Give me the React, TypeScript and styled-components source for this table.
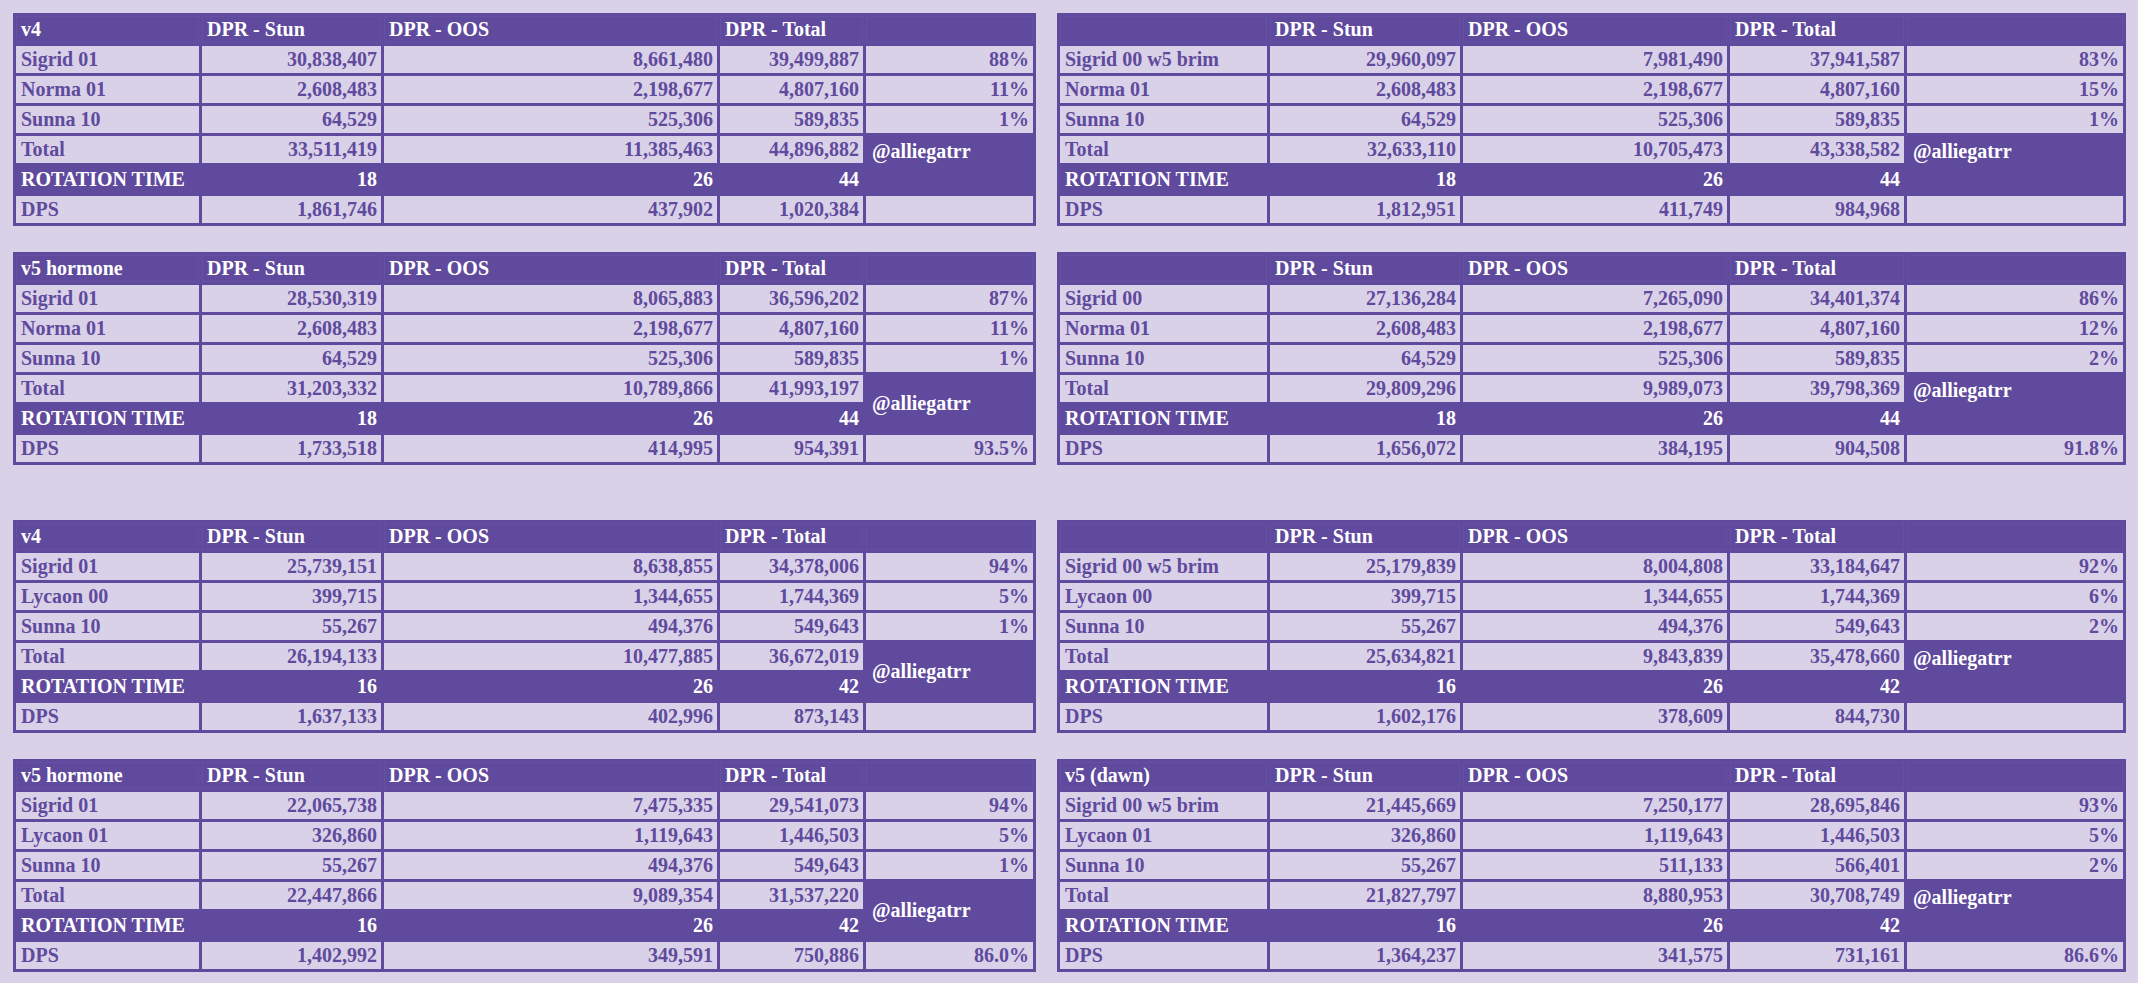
import React from 'react';
import styled, { createGlobalStyle } from 'styled-components';

const PURPLE = '#5f4a9d';
const LAVENDER = '#d9d1e8';

const GlobalStyle = createGlobalStyle`
    body {
        margin: 0;
        background: ${LAVENDER};
        font-family: "Liberation Serif", "Times New Roman", serif;
    }
`;

const Page = styled.div`
    display: flex;
    flex-direction: column;
    gap: 55px;
    padding: 13px 0 0 13px;
`;

const Section = styled.div`
    display: grid;
    grid-template-columns: 1023px 1069px;
    column-gap: 21px;
    row-gap: 26px;
    align-items: start;
`;

const Sheet = styled.table<{ $width: number }>`
    width: ${props => props.$width}px;
    table-layout: fixed;
    border-collapse: separate;
    border-spacing: 3px;
    background: ${PURPLE};
    font-size: 20px;
    font-weight: 700;
    line-height: 23px;
`;

const Row = styled.tr`
    height: 27px;
`;

const Cell = styled.td<{ $num?: boolean }>`
    height: 27px;
    padding: 0 ${props => (props.$num ? '4px' : '5px')};
    background: ${LAVENDER};
    color: ${PURPLE};
    text-align: ${props => (props.$num ? 'right' : 'left')};
    vertical-align: middle;
    white-space: nowrap;
    overflow: hidden;
`;

const HeadCell = styled.th`
    height: 27px;
    padding: 0 5px;
    background: ${PURPLE};
    box-shadow: inset 0 0 0 1px #6550a4;
    color: #ffffff;
    text-align: left;
    vertical-align: middle;
    font-weight: 700;
    white-space: nowrap;
`;

const DarkCell = styled.td<{ $num?: boolean }>`
    height: 27px;
    padding: 0 ${props => (props.$num ? '4px' : '5px')};
    background: ${PURPLE};
    color: #ffffff;
    text-align: ${props => (props.$num ? 'right' : 'left')};
    vertical-align: middle;
    white-space: nowrap;
`;

const TagCell = styled.td<{ $align: 'top' | 'middle' }>`
    padding: ${props => (props.$align === 'top' ? '4px 6px 0' : '0 6px')};
    background: ${PURPLE};
    color: #ffffff;
    text-align: left;
    vertical-align: ${props => props.$align};
    white-space: nowrap;
`;

type Dps = {
    title: string;
    tag: 'top' | 'middle';
    rows: string[][];
    total: string[];
    rotation: string[];
    dps: string[];
};

const DpsTable = ({ data, cols }: { data: Dps; cols: number[] }) => (
    <Sheet $width={cols.reduce((a, b) => a + b, 0) + 18}>
        <colgroup>
            {cols.map((w, i) => <col key={i} style={{ width: w }} />)}
        </colgroup>
        <thead>
            <Row>
                <HeadCell>{data.title}</HeadCell>
                <HeadCell>DPR - Stun</HeadCell>
                <HeadCell>DPR - OOS</HeadCell>
                <HeadCell>DPR - Total</HeadCell>
                <HeadCell />
            </Row>
        </thead>
        <tbody>
            {data.rows.map(r => (
                <Row key={r[0]}>
                    <Cell>{r[0]}</Cell>
                    <Cell $num>{r[1]}</Cell>
                    <Cell $num>{r[2]}</Cell>
                    <Cell $num>{r[3]}</Cell>
                    <Cell $num>{r[4]}</Cell>
                </Row>
            ))}
            <Row>
                <Cell>Total</Cell>
                <Cell $num>{data.total[0]}</Cell>
                <Cell $num>{data.total[1]}</Cell>
                <Cell $num>{data.total[2]}</Cell>
                <TagCell rowSpan={2} $align={data.tag}>@alliegatrr</TagCell>
            </Row>
            <Row>
                <DarkCell>ROTATION TIME</DarkCell>
                <DarkCell $num>{data.rotation[0]}</DarkCell>
                <DarkCell $num>{data.rotation[1]}</DarkCell>
                <DarkCell $num>{data.rotation[2]}</DarkCell>
            </Row>
            <Row>
                <Cell>DPS</Cell>
                <Cell $num>{data.dps[0]}</Cell>
                <Cell $num>{data.dps[1]}</Cell>
                <Cell $num>{data.dps[2]}</Cell>
                <Cell $num>{data.dps[3]}</Cell>
            </Row>
        </tbody>
    </Sheet>
);

const LEFT_COLS = [183, 179, 333, 143, 167];
const RIGHT_COLS = [207, 190, 264, 174, 216];

const top: Dps[] = [
    {
        title: 'v4',
        tag: 'top',
        rows: [
            ['Sigrid 01', '30,838,407', '8,661,480', '39,499,887', '88%'],
            ['Norma 01', '2,608,483', '2,198,677', '4,807,160', '11%'],
            ['Sunna 10', '64,529', '525,306', '589,835', '1%'],
        ],
        total: ['33,511,419', '11,385,463', '44,896,882'],
        rotation: ['18', '26', '44'],
        dps: ['1,861,746', '437,902', '1,020,384', ''],
    },
    {
        title: '',
        tag: 'top',
        rows: [
            ['Sigrid 00 w5 brim', '29,960,097', '7,981,490', '37,941,587', '83%'],
            ['Norma 01', '2,608,483', '2,198,677', '4,807,160', '15%'],
            ['Sunna 10', '64,529', '525,306', '589,835', '1%'],
        ],
        total: ['32,633,110', '10,705,473', '43,338,582'],
        rotation: ['18', '26', '44'],
        dps: ['1,812,951', '411,749', '984,968', ''],
    },
    {
        title: 'v5 hormone',
        tag: 'middle',
        rows: [
            ['Sigrid 01', '28,530,319', '8,065,883', '36,596,202', '87%'],
            ['Norma 01', '2,608,483', '2,198,677', '4,807,160', '11%'],
            ['Sunna 10', '64,529', '525,306', '589,835', '1%'],
        ],
        total: ['31,203,332', '10,789,866', '41,993,197'],
        rotation: ['18', '26', '44'],
        dps: ['1,733,518', '414,995', '954,391', '93.5%'],
    },
    {
        title: '',
        tag: 'top',
        rows: [
            ['Sigrid 00', '27,136,284', '7,265,090', '34,401,374', '86%'],
            ['Norma 01', '2,608,483', '2,198,677', '4,807,160', '12%'],
            ['Sunna 10', '64,529', '525,306', '589,835', '2%'],
        ],
        total: ['29,809,296', '9,989,073', '39,798,369'],
        rotation: ['18', '26', '44'],
        dps: ['1,656,072', '384,195', '904,508', '91.8%'],
    },
];

const bottom: Dps[] = [
    {
        title: 'v4',
        tag: 'middle',
        rows: [
            ['Sigrid 01', '25,739,151', '8,638,855', '34,378,006', '94%'],
            ['Lycaon 00', '399,715', '1,344,655', '1,744,369', '5%'],
            ['Sunna 10', '55,267', '494,376', '549,643', '1%'],
        ],
        total: ['26,194,133', '10,477,885', '36,672,019'],
        rotation: ['16', '26', '42'],
        dps: ['1,637,133', '402,996', '873,143', ''],
    },
    {
        title: '',
        tag: 'top',
        rows: [
            ['Sigrid 00 w5 brim', '25,179,839', '8,004,808', '33,184,647', '92%'],
            ['Lycaon 00', '399,715', '1,344,655', '1,744,369', '6%'],
            ['Sunna 10', '55,267', '494,376', '549,643', '2%'],
        ],
        total: ['25,634,821', '9,843,839', '35,478,660'],
        rotation: ['16', '26', '42'],
        dps: ['1,602,176', '378,609', '844,730', ''],
    },
    {
        title: 'v5 hormone',
        tag: 'middle',
        rows: [
            ['Sigrid 01', '22,065,738', '7,475,335', '29,541,073', '94%'],
            ['Lycaon 01', '326,860', '1,119,643', '1,446,503', '5%'],
            ['Sunna 10', '55,267', '494,376', '549,643', '1%'],
        ],
        total: ['22,447,866', '9,089,354', '31,537,220'],
        rotation: ['16', '26', '42'],
        dps: ['1,402,992', '349,591', '750,886', '86.0%'],
    },
    {
        title: 'v5 (dawn)',
        tag: 'top',
        rows: [
            ['Sigrid 00 w5 brim', '21,445,669', '7,250,177', '28,695,846', '93%'],
            ['Lycaon 01', '326,860', '1,119,643', '1,446,503', '5%'],
            ['Sunna 10', '55,267', '511,133', '566,401', '2%'],
        ],
        total: ['21,827,797', '8,880,953', '30,708,749'],
        rotation: ['16', '26', '42'],
        dps: ['1,364,237', '341,575', '731,161', '86.6%'],
    },
];

const Grid = ({ tables }: { tables: Dps[] }) => (
    <Section>
        {tables.map((t, i) => (
            <DpsTable key={i} data={t} cols={i % 2 === 0 ? LEFT_COLS : RIGHT_COLS} />
        ))}
    </Section>
);

export default function App() {
    return (
        <>
            <GlobalStyle />
            <Page>
                <Grid tables={top} />
                <Grid tables={bottom} />
            </Page>
        </>
    );
}
